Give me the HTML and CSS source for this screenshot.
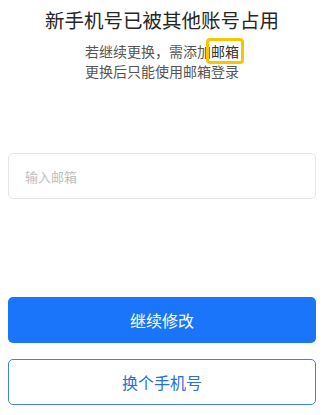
FILE: index.html
```html
<!DOCTYPE html>
<html>
<head>
    <meta charset="UTF-8">
    <title>更换手机号</title>
    <link rel="stylesheet" href="styles.css">
</head>
<body>
    <div class="page">
        <div class="header">
            <h1>新手机号已被其他账号占用</h1>
            <p>若继续更换，需添加<span class="mark">邮箱</span><br>更换后只能使用邮箱登录</p>
        </div>

        <div class="field">
            <input type="text" placeholder="输入邮箱">
        </div>

        <div class="actions">
            <button class="btn primary">继续修改</button>
            <button class="btn ghost">换个手机号</button>
        </div>
    </div>
</body>
</html>
```

FILE: styles.css
```css
:root {
    --blue: #1a75fb;
    --text: #222;
    --sub: #555;
}

body {
    margin: 0;
    font-family: "Noto Sans CJK SC", "Liberation Sans", sans-serif;
    background: #fff;
    color: var(--text);
}

.page {
    padding: 0 7px 0 8px;
}

.header {
    text-align: center;
    padding-top: 7px;
}

.header h1 {
    margin: 0;
    font-size: 19.5px;
    font-weight: 400;
    line-height: 26px;
    color: #262626;
}

.header p {
    margin: 8px 0 0;
    font-size: 14px;
    line-height: 20px;
    color: var(--sub);
}

.mark {
    display: inline-block;
    line-height: 18px;
    padding: 1px 2px;
    margin: -3px -5px;
    border: 3px solid #f7c600;
    border-radius: 4px;
    color: #333;
}

.field {
    margin-top: 72px;
}

.field input {
    box-sizing: border-box;
    width: 100%;
    height: 46px;
    padding: 0 16px;
    border: 1px solid #e6e6e6;
    border-radius: 5px;
    font-family: inherit;
    font-size: 13px;
    color: #333;
    outline: none;
}

.field input::placeholder {
    color: #bdbdbd;
}

.actions {
    margin-top: 98px;
    display: flex;
    flex-direction: column;
    gap: 16px;
}

.btn {
    height: 46px;
    border-radius: 5px;
    font-family: inherit;
    font-size: 16px;
    cursor: pointer;
}

.btn.primary {
    background: var(--blue);
    border: none;
    color: #fff;
}

.btn.ghost {
    background: #fff;
    border: 1px solid #3b82e6;
    color: #2a6fd8;
}
```
